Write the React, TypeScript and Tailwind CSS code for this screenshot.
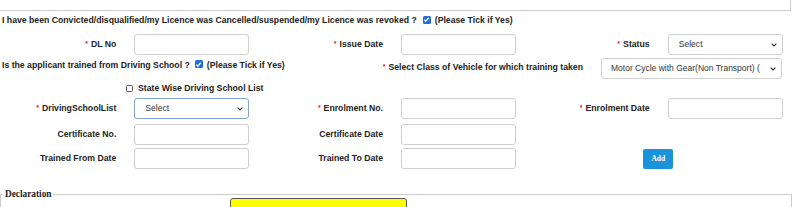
import React from "react";

const font = { fontFamily: '"Liberation Sans", Arial, sans-serif' };

function Checked() {
  return (
    <span className="inline-flex w-[8px] h-[8px] rounded-[1.5px] bg-[#1f6fe0] items-center justify-center shrink-0">
      <svg width="7" height="7" viewBox="0 0 8 8">
        <polyline points="1.5,4.2 3.2,6 6.6,2" fill="none" stroke="#fff" strokeWidth="1.4" />
      </svg>
    </span>
  );
}

function Chevron() {
  return (
    <svg width="6" height="4" viewBox="0 0 6 4" className="shrink-0">
      <polyline points="0.6,0.6 3,3 5.4,0.6" fill="none" stroke="#333" strokeWidth="1.2" />
    </svg>
  );
}

function Label({ text, req }: { text: string; req?: boolean }) {
  return (
    <div className="flex items-center justify-end pr-[17px] text-[8.7px] font-bold text-[#222] whitespace-nowrap">
      {req && <span className="text-[#e02020] text-[7px] mr-[3px]">*</span>}
      {text}
    </div>
  );
}

function Input() {
  return (
    <div className="flex items-center pl-px">
      <div className="w-[115px] h-[21px] border border-[#cfcfcf] rounded-[3px] bg-white" />
    </div>
  );
}

function Select({ focus, text }: { focus?: boolean; text: string }) {
  return (
    <div className="flex items-center pl-px">
      <div
        className={
          "w-[115px] h-[21px] rounded-[3px] bg-white flex items-center pl-[10px] pr-[5px] justify-between text-[8.6px] text-[#333] " +
          (focus ? "border border-[#7ea6d8]" : "border border-[#cfcfcf]")
        }
      >
        <span>{text}</span>
        <Chevron />
      </div>
    </div>
  );
}

export default function App() {
  return (
    <div className="w-[800px] h-[207px] overflow-hidden bg-white" style={font}>
      <div className="w-[791px] h-[11px] border-b border-r border-[#cccccc]" />

      <div className="h-[20px] flex items-center pl-[2px] text-[8.7px] font-bold text-[#222] whitespace-nowrap">
        <span>I have been Convicted/disqualified/my Licence was Cancelled/suspended/my Licence was revoked ?</span>
        <span className="ml-[6px]"><Checked /></span>
        <span className="ml-[4px]">(Please Tick if Yes)</span>
      </div>

      <div className="grid grid-cols-6 h-[21px] mt-[3px]">
        <Label text="DL No" req />
        <Input />
        <Label text="Issue Date" req />
        <Input />
        <Label text="Status" req />
        <Select text="Select" />
      </div>

      <div className="flex items-start h-[24px] text-[8.7px] font-bold text-[#222] whitespace-nowrap">
        <div className="flex items-center pl-[2px] mt-[4px] h-[13px]">
          <span>Is the applicant trained from Driving School ?</span>
          <span className="ml-[5px]"><Checked /></span>
          <span className="ml-[4px]">(Please Tick if Yes)</span>
        </div>
        <div className="flex-1 flex items-center justify-end pr-[18px] mt-[6px] h-[13px]">
          <span className="text-[#e02020] text-[7px] mr-[3px]">*</span>
          Select Class of Vehicle for which training taken
        </div>
        <div className="w-[181px] mr-[18px] mt-[3px] h-[21px] border border-[#cfcfcf] rounded-[3px] bg-white flex items-center pl-[9px] pr-[5px] justify-between font-normal text-[8.5px] text-[#333]">
          <span className="overflow-hidden">Motor Cycle with Gear(Non Transport) (</span>
          <Chevron />
        </div>
      </div>

      <div className="h-[19px] flex items-center pl-[126px] text-[8.7px] font-bold text-[#222]">
        <span className="w-[7px] h-[7px] border border-[#555] rounded-[1.5px] bg-white shrink-0" />
        <span className="ml-[5px]">State Wise Driving School List</span>
      </div>

      <div className="grid grid-cols-6 h-[21px]">
        <Label text="DrivingSchoolList" req />
        <Select text="Select" focus />
        <Label text="Enrolment No." req />
        <Input />
        <Label text="Enrolment Date" req />
        <Input />
      </div>

      <div className="grid grid-cols-6 h-[21px] mt-[5px]">
        <Label text="Certificate No." />
        <Input />
        <Label text="Certificate Date" />
        <Input />
        <div />
        <div />
      </div>

      <div className="grid grid-cols-6 h-[21px] mt-[3px]">
        <Label text="Trained From Date" />
        <Input />
        <Label text="Trained To Date" />
        <Input />
        <div className="col-span-2 flex items-center pl-[110px]">
          <button
            className="w-[30px] h-[20px] rounded-[2px] bg-[#1b93da] text-white font-bold text-[7.5px] flex items-center justify-center"
            style={{ fontFamily: '"Liberation Serif", "Times New Roman", serif' }}
          >
            Add
          </button>
        </div>
      </div>

      <fieldset className="mt-[20px] w-[792px] border border-[#cccccc] pl-[2px] h-[60px]">
        <legend
          className="px-[2px] text-[9.3px] font-bold text-[#222] leading-[11px]"
          style={{ fontFamily: '"Liberation Serif", "Times New Roman", serif' }}
        >
          Declaration
        </legend>
        <div className="-mt-[2px] ml-[227px] w-[177px] h-[30px] bg-[#ffff00] border border-[#555] rounded-[3px]" />
      </fieldset>
    </div>
  );
}
